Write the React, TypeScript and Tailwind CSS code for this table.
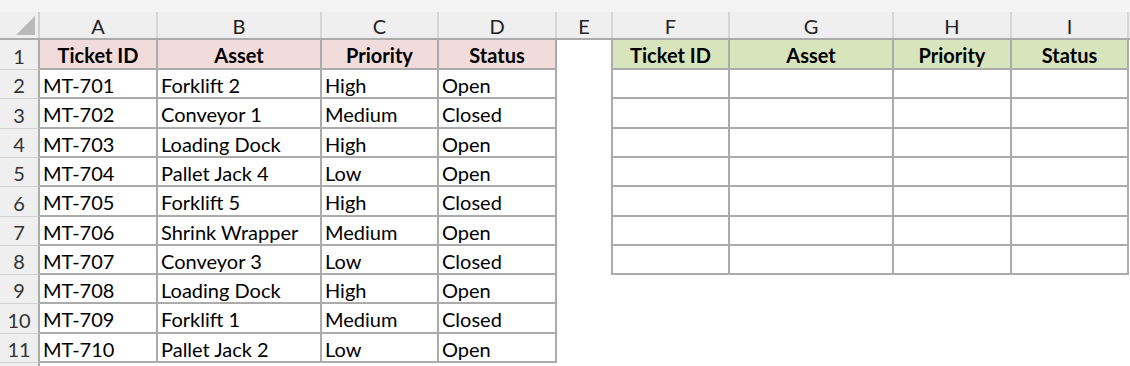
import React from "react";

const cols = ["A", "B", "C", "D", "E", "F", "G", "H", "I"];
const widths = ["w-[118px]", "w-[164px]", "w-[117px]", "w-[118px]", "w-[56px]", "w-[117px]", "w-[164px]", "w-[118px]", "w-[117px]"];
const heads = ["Ticket ID", "Asset", "Priority", "Status"];

const rows = [
  ["MT-701", "Forklift 2", "High", "Open"],
  ["MT-702", "Conveyor 1", "Medium", "Closed"],
  ["MT-703", "Loading Dock", "High", "Open"],
  ["MT-704", "Pallet Jack 4", "Low", "Open"],
  ["MT-705", "Forklift 5", "High", "Closed"],
  ["MT-706", "Shrink Wrapper", "Medium", "Open"],
  ["MT-707", "Conveyor 3", "Low", "Closed"],
  ["MT-708", "Loading Dock", "High", "Open"],
  ["MT-709", "Forklift 1", "Medium", "Closed"],
  ["MT-710", "Pallet Jack 2", "Low", "Open"],
];

// row heights so lines land where Excel puts them at this zoom
const rowH = ["h-[29px]", "h-[30px]", "h-[29px]", "h-[29px]", "h-[30px]", "h-[29px]", "h-[29px]", "h-[29px]", "h-[30px]", "h-[29px]"];

function RowHead({ n, h }: { n: string; h: string }) {
  return (
    <div className={`${h} w-[40px] shrink-0 flex items-center justify-center pt-[2px] bg-[#efefef] border-r-2 border-r-[#ababab] border-b border-b-[#d2d2d2] text-[#333]`}>
      {n}
    </div>
  );
}

export default function App() {
  return (
    <div
      className="w-[1130px] h-[366px] overflow-hidden bg-white text-[20px] text-black leading-none"
      style={{ fontFamily: "Lato, 'Open Sans', sans-serif" }}
    >
      {/* faded formula bar strip */}
      <div className="h-[12px] bg-[#f4f4f4]" />

      {/* column letters */}
      <div className="flex h-[28px] bg-[#efefef] border-b-2 border-[#ababab]">
        <div className="relative w-[40px] shrink-0 border-r-2 border-[#cfcfcf]">
          <svg className="absolute left-0 top-0" width="40" height="26">
            <polygon points="35,4 35,23 16,23" fill="#b9b9b9" />
          </svg>
        </div>
        {cols.map((c, i) => (
          <div key={c} className={`${widths[i]} shrink-0 flex items-center justify-center pt-[2px] border-r-2 border-[#d6d6d6] text-[#222]`}>
            {c}
          </div>
        ))}
        <div className="flex-1" />
      </div>

      {/* row 1: headers */}
      <div className="flex h-[30px]">
        <RowHead n="1" h="h-[30px]" />
        {heads.map((t, i) => (
          <div key={"l" + t} className={`${widths[i]} shrink-0 flex items-center justify-center pt-[2px] font-bold bg-[#f2dcdb] border-r-2 border-b-2 border-[#ababab]`}>
            {t}
          </div>
        ))}
        <div className="w-[56px] shrink-0 border-r-2 border-[#ababab]" />
        {heads.map((t, i) => (
          <div key={"r" + t} className={`${widths[i + 5]} shrink-0 flex items-center justify-center pt-[2px] font-bold bg-[#d8e4bc] border-r-2 border-b-2 border-[#ababab]`}>
            {t}
          </div>
        ))}
      </div>

      {rows.map((r, ri) => (
        <div key={r[0]} className={`flex ${rowH[ri]}`}>
          <RowHead n={String(ri + 2)} h={rowH[ri]} />
          {r.map((v, i) => (
            <div key={i} className={`${widths[i]} shrink-0 flex items-center pl-[3px] pt-[2px] border-r-2 border-b-2 border-[#ababab]`}>
              {v}
            </div>
          ))}
          <div className={`w-[56px] shrink-0 ${ri < 7 ? "border-r-2 border-[#ababab]" : ""}`} />
          {ri < 7 &&
            [5, 6, 7, 8].map((ci) => (
              <div key={ci} className={`${widths[ci]} shrink-0 border-r-2 border-b-2 border-[#ababab]`} />
            ))}
        </div>
      ))}

      <div className="flex h-[10px]">
        <div className="w-[40px] h-[10px] shrink-0 bg-[#efefef] border-r-2 border-[#ababab]" />
      </div>
    </div>
  );
}
